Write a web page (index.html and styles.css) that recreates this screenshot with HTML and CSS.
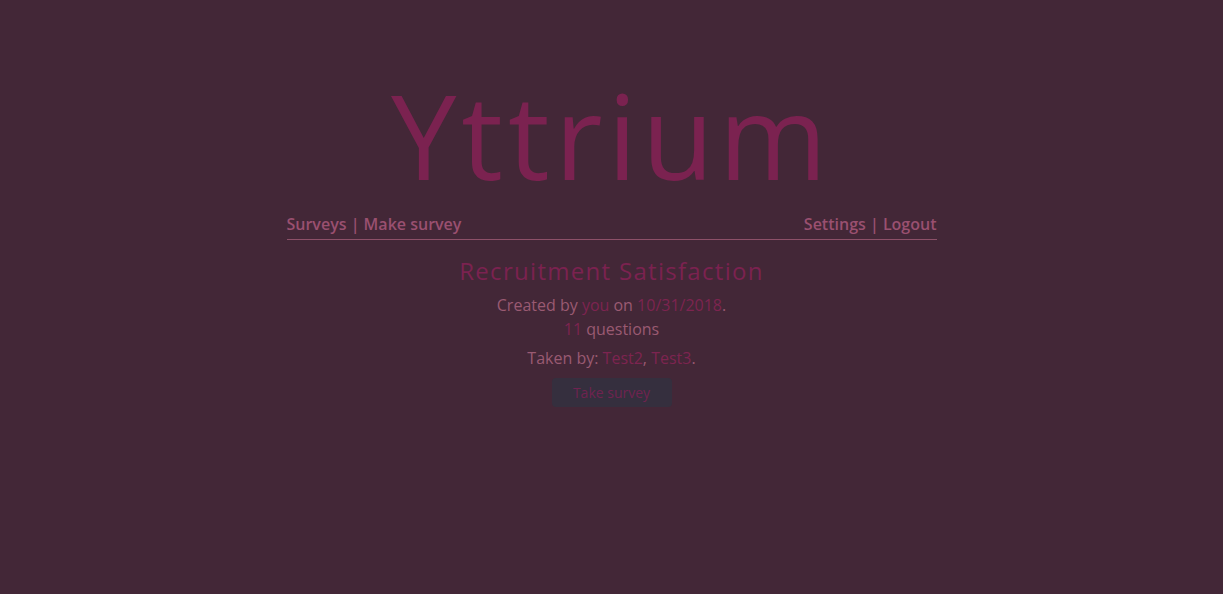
FILE: index.html
```html
<!DOCTYPE html>
<html>
<head>
<meta charset="utf-8">
<title>Yttrium</title>
<link rel="stylesheet" href="styles.css">
</head>
<body>
<div class="page">
  <header class="header">
    <h1 class="logo">Yttrium</h1>
    <nav class="nav">
      <div class="nav-group"><a href="#">Surveys</a> | <a href="#">Make survey</a></div>
      <div class="nav-group"><a href="#">Settings</a> | <a href="#">Logout</a></div>
    </nav>
  </header>
  <main class="survey">
    <h2 class="survey-title">Recruitment Satisfaction</h2>
    <p class="meta">Created by <a href="#">you</a> on <a href="#">10/31/2018</a>.<br><a href="#">11</a> questions</p>
    <p class="meta taken">Taken by: <a href="#">Test2</a>, <a href="#">Test3</a>.</p>
    <button class="take">Take survey</button>
  </main>
</div>
</body>
</html>
```
FILE: styles.css
```css
html, body {
  margin: 0;
  padding: 0;
  background: #432737;
  font-family: "Open Sans", "Liberation Sans", sans-serif;
}
.page {
  width: 650px;
  margin: 0 auto;
}
.header {
  display: flex;
  flex-direction: column;
}
.logo {
  margin: 75px 0 18px;
  text-align: center;
  font-size: 117px;
  font-weight: 500;
  line-height: 120px;
  color: #7b2250;
  letter-spacing: 5px;
}
.nav {
  display: flex;
  justify-content: space-between;
  padding-bottom: 4px;
  border-bottom: 1px solid #8c5068;
  font-size: 16px;
  font-weight: 600;
  color: #9a5070;
  line-height: 22px;
}
.nav a {
  color: #9a5070;
  text-decoration: none;
}
.survey {
  display: flex;
  flex-direction: column;
  align-items: center;
}
.survey-title {
  margin: 15px 0 6px;
  font-size: 24px;
  font-weight: 400;
  color: #7b2250;
  line-height: 32px;
  letter-spacing: 1.3px;
}
.meta {
  margin: 0;
  font-size: 16px;
  line-height: 24px;
  text-align: center;
  color: #9a5a72;
}
.meta a {
  color: #7d2450;
  text-decoration: none;
}
.taken {
  margin-top: 5px;
}
.take {
  margin-top: 8px;
  width: 120px;
  height: 29px;
  border: none;
  border-radius: 4px;
  background: #352f3e;
  color: #6f2350;
  font-family: "Open Sans", sans-serif;
  font-size: 14px;
}
```
